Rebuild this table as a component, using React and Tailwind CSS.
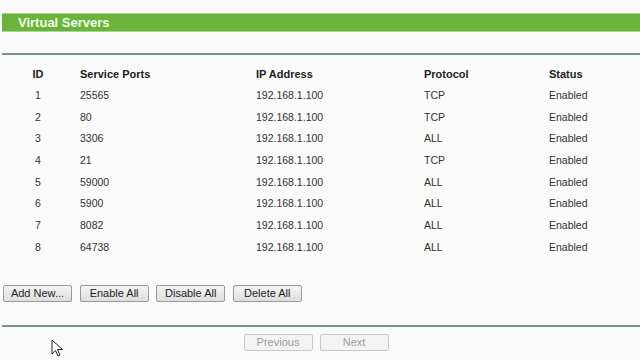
import React from 'react';

const rows = [
  { id: 1, port: '25565', ip: '192.168.1.100', proto: 'TCP', status: 'Enabled' },
  { id: 2, port: '80', ip: '192.168.1.100', proto: 'TCP', status: 'Enabled' },
  { id: 3, port: '3306', ip: '192.168.1.100', proto: 'ALL', status: 'Enabled' },
  { id: 4, port: '21', ip: '192.168.1.100', proto: 'TCP', status: 'Enabled' },
  { id: 5, port: '59000', ip: '192.168.1.100', proto: 'ALL', status: 'Enabled' },
  { id: 6, port: '5900', ip: '192.168.1.100', proto: 'ALL', status: 'Enabled' },
  { id: 7, port: '8082', ip: '192.168.1.100', proto: 'ALL', status: 'Enabled' },
  { id: 8, port: '64738', ip: '192.168.1.100', proto: 'ALL', status: 'Enabled' },
];

const gridCols = 'grid grid-cols-[80px_176px_168px_125px_1fr] items-center';

const Btn = ({ children }) => (
  <button className="w-[69px] h-[17px] rounded-[2px] border border-[#9a9a9a] bg-gradient-to-b from-[#f4f4f4] to-[#dedede] text-[11px] leading-none text-[#1e1e1e]">
    {children}
  </button>
);

const NavBtn = ({ children }) => (
  <button className="w-[69px] h-[17px] rounded-[2px] border border-[#c9c9c9] bg-[#f3f3f3] text-[11px] leading-none text-[#9b9b9b]">
    {children}
  </button>
);

const App = () => {
  return (
    <div className="relative w-[640px] h-[360px] overflow-hidden bg-[#f9faf9] font-['Liberation_Sans',Arial,sans-serif] text-[#2b2b2b]">
      {/* Section title bar */}
      <div className="pt-[13px] pl-[2px]">
        <div className="h-[19px] bg-[#6ab43b] border-y border-[#a9d78e] flex items-center pl-[16px]">
          <span className="text-[13px] font-bold text-[#f2ffe8] leading-none">Virtual Servers</span>
        </div>
      </div>

      <div className="ml-[2px] mt-[21px] h-[2px] bg-[#7c948e]" />

      {/* Server table */}
      <div className="mt-[8px]">
        <div className={`${gridCols} h-[22px] text-[11px] font-bold text-[#222]`}>
          <div className="pl-[28px]"><span className="inline-block w-[20px] text-center">ID</span></div>
          <div>Service Ports</div>
          <div>IP Address</div>
          <div>Protocol</div>
          <div>Status</div>
        </div>
        {rows.map((r) => (
          <div key={r.id} className={`${gridCols} h-[21.7px] text-[10.5px] text-[#333]`}>
            <div className="pl-[28px]"><span className="inline-block w-[20px] text-center">{r.id}</span></div>
            <div>{r.port}</div>
            <div>{r.ip}</div>
            <div>{r.proto}</div>
            <div>{r.status}</div>
          </div>
        ))}
      </div>

      {/* Actions */}
      <div className="mt-[26px] ml-[3px] flex gap-[7.6px]">
        <Btn>Add New...</Btn>
        <Btn>Enable All</Btn>
        <Btn>Disable All</Btn>
        <Btn>Delete All</Btn>
      </div>

      <div className="ml-[2px] mt-[23px] h-[2px] bg-[#7c948e]" />

      <div className="mt-[7px] flex justify-center gap-[7px] pr-[8px]">
        <NavBtn>Previous</NavBtn>
        <NavBtn>Next</NavBtn>
      </div>

      {/* mouse pointer */}
      <svg className="absolute left-[51px] top-[339px]" width="13" height="19" viewBox="0 0 13 19">
        <path d="M1 1 L1 15 L4.5 11.5 L7 17 L9 16 L6.5 10.5 L11.5 10.5 Z" fill="#fff" stroke="#222" strokeWidth="1" strokeLinejoin="round" />
      </svg>
    </div>
  );
};

export default App;
